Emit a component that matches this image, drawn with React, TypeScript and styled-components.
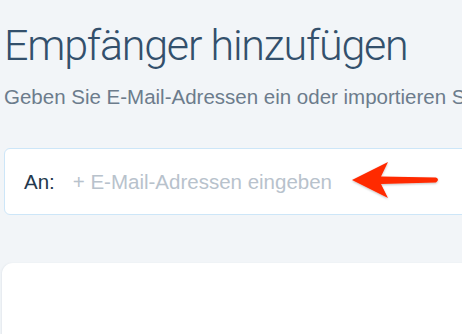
import React from "react";
import styled, { createGlobalStyle } from "styled-components";

const Global = createGlobalStyle`
  html, body { margin: 0; padding: 0; background: #f2f5f8; overflow: hidden; }
  body { width: 462px; height: 334px; }
`;

const Page = styled.div`
  width: 700px;
  padding: 20px 0 0 4px;
  display: flex;
  flex-direction: column;
  font-family: "Liberation Sans", Arial, sans-serif;
`;

const Title = styled.h1`
  margin: 0;
  font-family: Roboto, "Liberation Sans", sans-serif;
  font-weight: 300;
  font-size: 43px;
  letter-spacing: -1.2px;
  line-height: 50px;
  color: #33506c;
  white-space: nowrap;
`;

const Subtitle = styled.p`
  margin: 15px 0 0 0;
  font-size: 20.5px;
  line-height: 24px;
  color: #6c7c8c;
  white-space: nowrap;
`;

const Field = styled.div`
  margin-top: 39px;
  height: 67px;
  box-sizing: border-box;
  background: #fff;
  border: 1px solid #cde6f8;
  border-radius: 6px;
  display: flex;
  align-items: center;
  padding: 0 0 0 19px;
  gap: 18px;
  position: relative;
`;

const Label = styled.span`
  font-size: 20.5px;
  color: #23384d;
`;

const Placeholder = styled.span`
  font-size: 20.5px;
  color: #b8c2cc;
`;

const Arrow = styled.svg`
  position: absolute;
  left: 341px;
  top: 9px;
`;

const Card = styled.div`
  margin: 48px 0 0 -2px;
  height: 120px;
  background: #fff;
  border-radius: 11px;
  box-shadow: -1px 0 2px rgba(40, 70, 100, 0.06);
`;

export default function App() {
  return (
    <>
      <Global />
      <Page>
        <Title>Empfänger hinzufügen</Title>
        <Subtitle>Geben Sie E-Mail-Adressen ein oder importieren Sie Kontakte</Subtitle>
        <Field>
          <Label>An:</Label>
          <Placeholder>+ E-Mail-Adressen eingeben</Placeholder>
          <Arrow width="100" height="44" viewBox="346 158 100 44">
            <defs>
              <filter id="sh" x="-20%" y="-20%" width="140%" height="140%">
                <feDropShadow dx="0" dy="1" stdDeviation="1" floodColor="#000" floodOpacity="0.25" />
              </filter>
            </defs>
            <path
              d="M352 180 L388 162 L381 176.5 L436 177.5 Q440 179.5 436 182.5 L381 184 L388 198 Z"
              fill="#ff2a00"
              filter="url(#sh)"
            />
          </Arrow>
        </Field>
        <Card />
      </Page>
    </>
  );
}
